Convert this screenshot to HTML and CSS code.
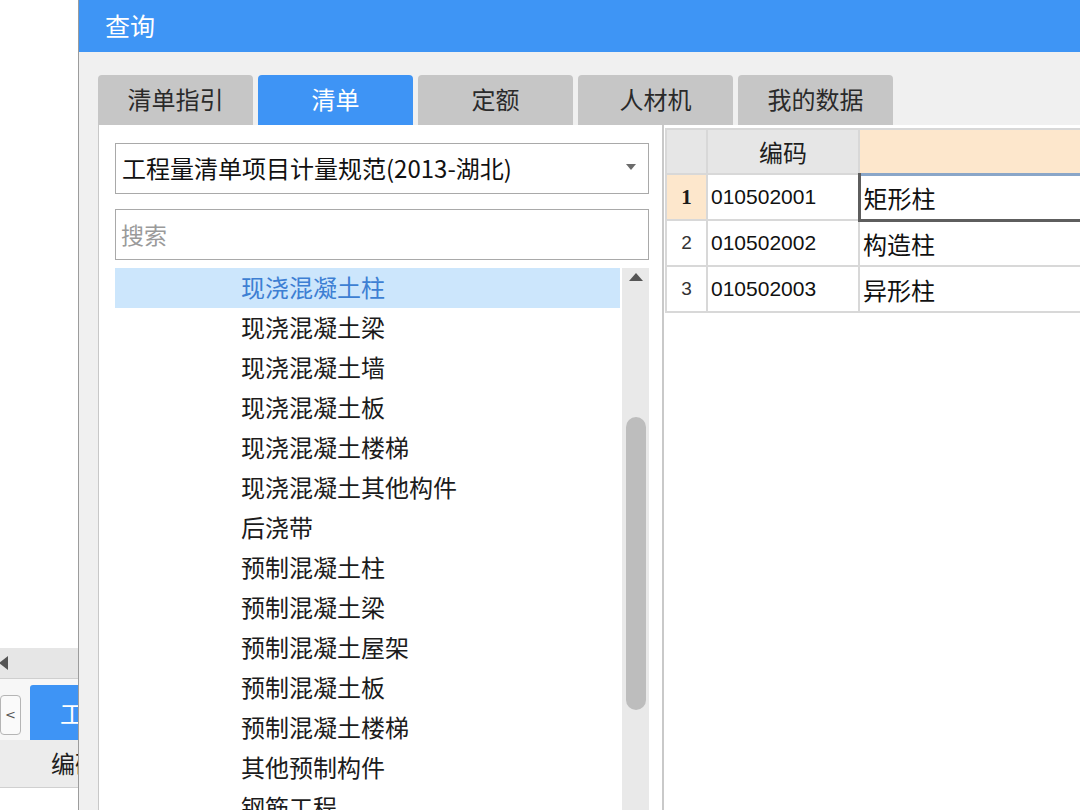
FILE: index.html
```html
<!DOCTYPE html>
<html lang="zh-CN">
<head>
<meta charset="utf-8">
<title>查询</title>
<link rel="stylesheet" href="styles.css">
</head>
<body>
<div class="screen">
  <div class="bg-left">
    <div class="bg-blank"></div>
    <div class="hscroll"><span class="arrow-left"></span></div>
    <div class="tabstrip">
      <div class="nav-btn">&lt;</div>
      <div class="bg-tab">工程</div>
    </div>
    <div class="bg-header">编码</div>
  </div>

  <div class="dialog">
    <div class="titlebar">查询</div>
    <div class="dialog-body">
      <div class="tabs">
        <div class="tab">清单指引</div>
        <div class="tab active">清单</div>
        <div class="tab">定额</div>
        <div class="tab">人材机</div>
        <div class="tab">我的数据</div>
      </div>
      <div class="content">
        <div class="left-panel">
          <div class="select">
            <span class="select-text">工程量清单项目计量规范(2013-湖北)</span>
            <svg class="select-arrow" width="10" height="6" viewBox="0 0 10 6"><path d="M0 0H10L5 6Z" fill="#6b6b6b"/></svg>
          </div>
          <div class="search">搜索</div>
          <div class="tree">
            <ul class="tree-list">
              <li class="tree-item selected">现浇混凝土柱</li>
              <li class="tree-item">现浇混凝土梁</li>
              <li class="tree-item">现浇混凝土墙</li>
              <li class="tree-item">现浇混凝土板</li>
              <li class="tree-item">现浇混凝土楼梯</li>
              <li class="tree-item">现浇混凝土其他构件</li>
              <li class="tree-item">后浇带</li>
              <li class="tree-item">预制混凝土柱</li>
              <li class="tree-item">预制混凝土梁</li>
              <li class="tree-item">预制混凝土屋架</li>
              <li class="tree-item">预制混凝土板</li>
              <li class="tree-item">预制混凝土楼梯</li>
              <li class="tree-item">其他预制构件</li>
              <li class="tree-item">钢筋工程</li>
            </ul>
            <div class="vscroll">
              <svg class="up-arrow" width="14" height="8" viewBox="0 0 14 8"><path d="M0 8H14L7 0Z" fill="#555"/></svg>
              <div class="thumb"></div>
            </div>
          </div>
        </div>
        <div class="right-panel">
          <table class="grid">
            <colgroup>
              <col class="c-num"><col class="c-code"><col class="c-name">
            </colgroup>
            <thead>
              <tr>
                <th class="h-corner"></th>
                <th class="h-code">编码</th>
                <th class="h-name"></th>
              </tr>
            </thead>
            <tbody>
              <tr class="cur">
                <td class="num num-cur">1</td>
                <td class="code code-cur">010502001</td>
                <td class="name name-cur">矩形柱</td>
              </tr>
              <tr>
                <td class="num">2</td>
                <td class="code">010502002</td>
                <td class="name">构造柱</td>
              </tr>
              <tr>
                <td class="num">3</td>
                <td class="code">010502003</td>
                <td class="name">异形柱</td>
              </tr>
            </tbody>
          </table>
        </div>
      </div>
    </div>
  </div>
</div>
</body>
</html>
```
FILE: styles.css
```css
* { box-sizing: border-box; }
html, body { margin: 0; padding: 0; }
body {
  width: 1080px;
  height: 810px;
  overflow: hidden;
  background: #ffffff;
  font-family: "Noto Sans CJK SC", "Noto Sans", sans-serif;
  color: #1e1e1e;
}
.screen {
  display: flex;
  width: 1080px;
  height: 810px;
  overflow: hidden;
}

/* background application on the left */
.bg-left {
  width: 78px;
  flex: none;
  display: flex;
  flex-direction: column;
  overflow: hidden;
  background: #ffffff;
}
.bg-blank { height: 648px; flex: none; }
.hscroll {
  height: 31px;
  flex: none;
  background: #e6e6e6;
  border-bottom: 1px solid #cfcfcf;
  display: flex;
  align-items: center;
}
.arrow-left {
  width: 0; height: 0;
  border-top: 7px solid transparent;
  border-bottom: 7px solid transparent;
  border-right: 9px solid #555;
  margin-left: -1px;
}
.tabstrip {
  height: 61px;
  flex: none;
  display: flex;
  align-items: flex-end;
  background: #f7f7f7;
}
.nav-btn {
  width: 21px;
  height: 40px;
  margin-bottom: 5px;
  border: 1px solid #b5b5b5;
  border-radius: 4px;
  background: #fafafa;
  color: #555;
  font-family: "DejaVu Sans", sans-serif;
  font-size: 13px;
  line-height: 38px;
  text-align: center;
  flex: none;
}
.bg-tab {
  margin-left: 9px;
  height: 55px;
  width: 60px;
  flex: none;
  background: #3e94f5;
  color: #fff;
  font-size: 24px;
  line-height: 55px;
  padding-left: 30px;
  white-space: nowrap;
  overflow: hidden;
  border-radius: 3px 0 0 0;
}
.bg-header {
  height: 48px;
  flex: none;
  background: #ececec;
  border-bottom: 1px solid #d0d0d0;
  font-size: 24px;
  line-height: 46px;
  padding-left: 51px;
  white-space: nowrap;
  overflow: hidden;
}

/* dialog */
.dialog {
  flex: none;
  width: 1100px;
  border-left: 1px solid #9c9c9c;
  display: flex;
  flex-direction: column;
  background: #f0f0f0;
}
.titlebar {
  height: 52px;
  flex: none;
  background: #3e95f5;
  color: #ffffff;
  font-size: 25px;
  line-height: 50px;
  padding-left: 26px;
}
.dialog-body {
  flex: 1;
  padding: 23px 0 0 19px;
  display: flex;
  flex-direction: column;
  min-height: 0;
}
.tabs {
  display: flex;
  gap: 5px;
  height: 50px;
  flex: none;
}
.tab {
  width: 155px;
  height: 50px;
  background: #c6c6c6;
  border-radius: 4px 4px 0 0;
  color: #2a2a2a;
  font-size: 24px;
  line-height: 48px;
  text-align: center;
}
.tab.active {
  background: #3e94f5;
  color: #ffffff;
}
.content {
  flex: 1;
  display: flex;
  min-height: 0;
}
.left-panel {
  width: 564px;
  flex: none;
  background: #ffffff;
  border-left: 1px solid #c8c8c8;
  padding: 18px 13px 0 16px;
  display: flex;
  flex-direction: column;
}
.select {
  height: 51px;
  border: 1px solid #a9a9a9;
  display: flex;
  align-items: center;
  justify-content: space-between;
  padding: 0 12px 0 6px;
  flex: none;
}
.select-text {
  font-size: 24px;
  color: #111;
  white-space: nowrap;
  margin-top: -2px;
}
.select-arrow { margin-top: -4px; }
.search {
  margin-top: 15px;
  height: 51px;
  border: 1px solid #a9a9a9;
  font-size: 23px;
  line-height: 49px;
  padding-left: 5px;
  color: #9a9a9a;
  flex: none;
}
.tree {
  margin-top: 8px;
  flex: 1;
  display: flex;
  gap: 2px;
  min-height: 0;
  overflow: hidden;
}
.tree-list {
  list-style: none;
  margin: 0;
  padding: 0;
  flex: 1;
}
.tree-item {
  height: 40px;
  line-height: 38px;
  padding-left: 126px;
  font-size: 24px;
  color: #1c1c1c;
  white-space: nowrap;
}
.tree-item.selected {
  background: #cce6fc;
  color: #3d7fd3;
}
.vscroll {
  width: 27px;
  flex: none;
  background: #e9e9e9;
  display: flex;
  flex-direction: column;
  align-items: center;
}
.up-arrow { margin-top: 5px; flex: none; }
.thumb {
  margin-top: 136px;
  width: 20px;
  height: 293px;
  border-radius: 10px;
  background: #bdbdbd;
  flex: none;
}

.right-panel {
  flex: 1;
  background: #ffffff;
  border-left: 2px solid #c9c9c9;
  padding: 3px 0 0 1px;
  overflow: hidden;
}
.grid {
  border-collapse: collapse;
  table-layout: fixed;
  width: 600px;
  border-left: 2px solid #d6d6d6;
}
.c-num { width: 41px; }
.c-code { width: 152px; }
.c-name { width: 407px; }
.grid th, .grid td {
  border: 2px solid #d8d8d8;
  padding: 0;
  white-space: nowrap;
  overflow: hidden;
}
.grid thead tr { height: 45px; }
.grid tbody tr { height: 46px; }
.grid th {
  font-weight: normal;
  font-size: 24px;
  color: #1e1e1e;
  background: #e6e6e6;
}
.grid th.h-name { background: #fde7cc; }
.num {
  text-align: center;
  font-family: "Liberation Sans", sans-serif;
  font-size: 19px;
  color: #333;
}
.num-cur {
  background: #fde7cc;
  font-family: "Liberation Serif", serif;
  font-weight: bold;
  font-size: 21px;
  color: #1a1a1a;
}
.code {
  font-family: "Liberation Sans", sans-serif;
  font-size: 21px;
  padding-left: 3px !important;
  color: #111;
}
.code-cur { border-left: 2px solid #3c8de6 !important; }
.name {
  font-size: 24px;
  padding-left: 3px !important;
  color: #111;
}
.name-cur {
  border-top: 3px solid #8aa6c8 !important;
  border-left: 3px solid #5e5e5e !important;
  border-bottom: 3px solid #5e5e5e !important;
}
```
